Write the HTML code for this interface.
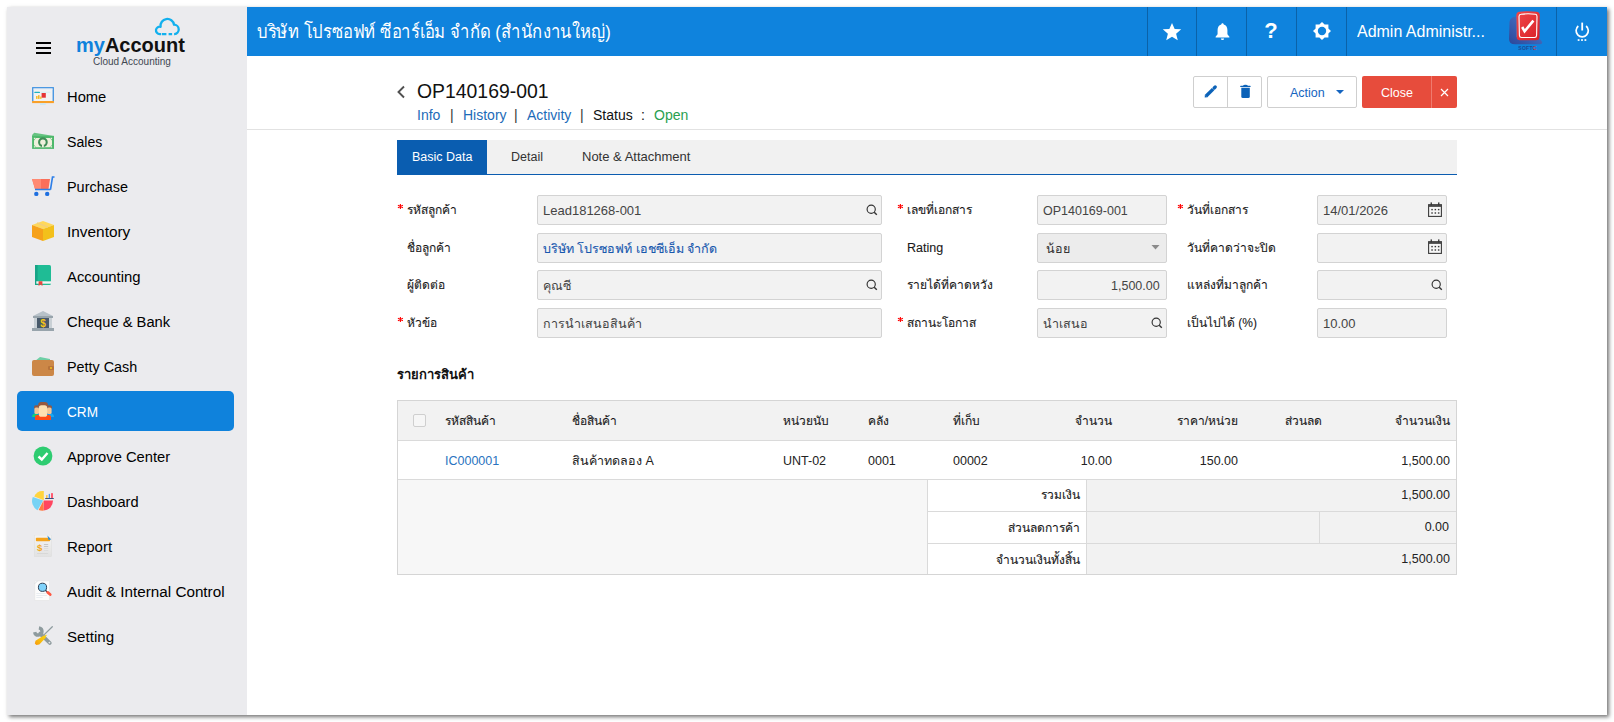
<!DOCTYPE html>
<html><head><meta charset="utf-8">
<style>
*{box-sizing:border-box;margin:0;padding:0}
html,body{width:1614px;height:722px;overflow:hidden;background:#fff;font-family:"Liberation Sans",sans-serif;color:#222}
.win{position:absolute;left:7px;top:7px;width:1600px;height:708px;background:#fff;box-shadow:2px 2px 4px rgba(0,0,0,.55)}
.side{position:absolute;left:0;top:0;width:240px;height:708px;background:#ebebee}
.abs{position:absolute}
.nav{position:absolute;left:0;width:240px;height:40px;}
.nav .ic{position:absolute;left:24px;top:9px;width:24px;height:22px}
.nav .tx{position:absolute;left:60px;top:1px;line-height:40px;font-size:15.4px;transform-origin:0 0;color:#000;white-space:nowrap}
.nav.act .bg{position:absolute;left:10px;top:0;width:217px;height:40px;background:#0f82dc;border-radius:5px}
.nav.act .tx{color:#fff}
.top{position:absolute;left:240px;top:0;width:1360px;height:49px;background:#0f83dd}
.top .ttl{position:absolute;left:10px;top:0;line-height:49px;font-size:19px;transform:scaleX(0.876);transform-origin:0 0;color:#fff;white-space:nowrap}
.sep{position:absolute;top:0;width:1px;height:49px;background:#0b62a8}
.hic{position:absolute;top:0;height:49px;width:49px}

.t{position:absolute;line-height:20px;white-space:nowrap}
.inp{position:absolute;height:30px;background:#f2f2f2;border:1px solid #d3d3d3;border-radius:2px}
.lbl{font-size:12px;color:#1a1a1a;-webkit-text-stroke:0.1px #1a1a1a}
.req{color:#e4161b;font-size:15px;margin-top:-1px}
.tbl{position:absolute;border:1px solid #d5d5d5}
.hl{position:absolute;height:1px;background:#dadada}
.vl{position:absolute;width:1px;background:#dadada}
</style></head><body>
<div class="win">
  <div class="side">
    <!-- hamburger -->
    <div class="abs" style="left:29px;top:35px;width:15px;height:2px;background:#000"></div>
    <div class="abs" style="left:29px;top:40px;width:15px;height:2px;background:#000"></div>
    <div class="abs" style="left:29px;top:45px;width:15px;height:2px;background:#000"></div>
    <!-- logo -->
    <div class="abs" style="left:69px;top:26px;font-size:20px;font-weight:700;letter-spacing:0;white-space:nowrap;line-height:24px"><span style="color:#0f82dc">my</span><span style="color:#111">Account</span></div>
    <div class="abs" style="left:86px;top:49px;font-size:10px;color:#3f4852;white-space:nowrap;line-height:12px">Cloud Accounting</div>
    <svg class="abs" style="left:147px;top:10px" width="27" height="19" viewBox="0 0 27 19"><path d="M7 17.1 H5.7 A3.7 3.7 0 1 1 6.58 9.81 A6.8 6.8 0 0 1 20.02 7.72 A4.7 4.7 0 0 1 20.45 17.1 H20.1 M7.8 17.1 H12.4 M14.6 17.1 H18.1" fill="none" stroke="#12b0ee" stroke-width="2.3" stroke-linejoin="round"/></svg>

    <div class="nav" style="top:69px"><svg class="ic" viewBox="0 0 24 22"><rect x="1.1" y="2.1" width="21.8" height="14.5" fill="#3a8fe0"/><rect x="2.4" y="3.5" width="19.2" height="12.6" fill="#f2f2f2"/><rect x="2.4" y="3.5" width="19.2" height="1" fill="#dfe9f5"/><rect x="3.3" y="6.8" width="5.7" height="1.3" rx="0.6" fill="#1eb1c0"/><rect x="9.5" y="6.8" width="10" height="0.8" fill="#c9eef3"/><rect x="5" y="11" width="1.6" height="2.9" fill="#f5c030"/><rect x="7" y="10.2" width="1.6" height="3.7" fill="#f5b52a"/><rect x="9" y="11.5" width="1.6" height="2.4" fill="#f7c840"/><rect x="10.6" y="8" width="4.2" height="4.7" fill="#e53535"/><rect x="1.1" y="16" width="21.8" height="2.1" fill="#f9a028"/><rect x="9" y="18.4" width="5.8" height="1.4" fill="#c3e8fa"/></svg><div class="tx" style="transform:scaleX(0.957)">Home</div></div>

    <div class="nav" style="top:114px"><svg class="ic" viewBox="0 0 24 22"><path d="M3.2 2.8 L23 5.9 V7 H1.1 V5z" fill="#66c381"/><rect x="1.1" y="5.9" width="21.9" height="13" fill="#4db86b"/><path d="M5.2 8 H18.8 L21 10.2 V15 L18.8 17.2 H5.2 L3 15 V10.2z" fill="#eef0dc"/><g fill="#eef0dc"><rect x="2.9" y="7.8" width="1.5" height="1.3"/><rect x="19.6" y="7.8" width="1.5" height="1.3"/><rect x="2.9" y="16.2" width="1.5" height="1.3"/><rect x="19.6" y="16.2" width="1.5" height="1.3"/></g><circle cx="11.9" cy="12.2" r="3.8" fill="none" stroke="#3f8d56" stroke-width="2.1"/><rect x="11" y="14.6" width="1.8" height="2.6" fill="#eef0dc"/></svg><div class="tx" style="transform:scaleX(0.917)">Sales</div></div>

    <div class="nav" style="top:159px"><svg class="ic" viewBox="0 0 24 22"><path d="M1 4 H19 L17.5 14 H4z" fill="#fa6f5a"/><path d="M1 4 H10 V14 H4z" fill="#ff8a73"/><path d="M19.5 14.5 H4 M19.5 14.5 L21.5 2 H23.5" stroke="#2e7fe8" stroke-width="1.6" fill="none"/><circle cx="5.3" cy="18.9" r="2.2" fill="#1e6fe0"/><circle cx="16.2" cy="18.9" r="2.2" fill="#1e6fe0"/></svg><div class="tx" style="transform:scaleX(0.937)">Purchase</div></div>

    <div class="nav" style="top:204px"><svg class="ic" viewBox="0 0 24 22"><path d="M12 1 L23 5 L12 9 L1 5z" fill="#ffd85a"/><path d="M1 5 L12 9 V21 L1 17z" fill="#f6a11a"/><path d="M23 5 L12 9 V21 L23 17z" fill="#f3c01b"/><path d="M6 3 L17 7" stroke="#f2cf7a" stroke-width="1.5"/></svg><div class="tx" style="transform:scaleX(1.0)">Inventory</div></div>

    <div class="nav" style="top:249px"><svg class="ic" viewBox="0 0 24 22"><rect x="4" y="0" width="16" height="20" rx="1.6" fill="#1fbc95"/><rect x="4" y="0" width="2.6" height="20" fill="#17a487"/><rect x="5.3" y="16.3" width="14.7" height="2.4" fill="#f4f4f4"/><path d="M7.6 16.3 H11.4 V21 L9.5 19.6 L7.6 21z" fill="#e8463f"/></svg><div class="tx" style="transform:scaleX(0.965)">Accounting</div></div>

    <div class="nav" style="top:294px"><svg class="ic" viewBox="0 0 24 22"><path d="M12 1 L22 6 H2z" fill="#b7c1c8"/><rect x="2" y="6" width="20" height="2" fill="#98a4ac"/><rect x="3" y="8" width="3" height="10" fill="#c9d0d5"/><rect x="18" y="8" width="3" height="10" fill="#c9d0d5"/><rect x="6" y="8" width="12" height="10" fill="#48596a"/><text x="12" y="16.5" font-size="10" font-weight="700" fill="#f5c518" text-anchor="middle" font-family="Liberation Sans">$</text><rect x="1" y="18" width="22" height="3" fill="#98a4ac"/></svg><div class="tx" style="transform:scaleX(0.957)">Cheque &amp; Bank</div></div>

    <div class="nav" style="top:339px"><svg class="ic" viewBox="0 0 24 22"><path d="M4 6 L9 2 L19 4 L19 6z" fill="#6ecfa5"/><rect x="1" y="5" width="22" height="16" rx="2" fill="#cc8747"/><rect x="17" y="11" width="6" height="4" rx="1" fill="#b8733a"/><circle cx="20" cy="13" r="1" fill="#f5c518"/></svg><div class="tx" style="transform:scaleX(0.932)">Petty Cash</div></div>

    <div class="nav act" style="top:384px"><div class="bg"></div><svg class="ic" viewBox="0 0 24 22"><path d="M1 17 Q1 13.5 4.5 13.5 H6.5 V17z" fill="#16cf7c"/><path d="M23 17 Q23 13.5 19.5 13.5 H17.5 V17z" fill="#16a9f4"/><path d="M3 8.6 V6.8 Q3 5.2 4.8 5.2 H7.8 V8.6z" fill="#8f5a48"/><path d="M21 8.6 V6.8 Q21 5.2 19.2 5.2 H16.2 V8.6z" fill="#8f5a48"/><rect x="3.4" y="7.4" width="4.6" height="6.6" rx="1.6" fill="#f6c592"/><rect x="16" y="7.4" width="4.6" height="6.6" rx="1.6" fill="#f6c592"/><path d="M4 20 V16.6 Q4 14.9 6 14.9 H18 Q20 14.9 20 16.6 V20z" fill="#ff4b16"/><path d="M7 7 L7.3 3.8 Q7.7 2 10 2 H14 Q16.5 2 16.8 3.8 L17.1 7z" fill="#96593f"/><rect x="7.8" y="5.2" width="8.4" height="11.6" rx="2.6" fill="#fde0b2"/></svg><div class="tx" style="transform:scaleX(0.883)">CRM</div></div>

    <div class="nav" style="top:429px"><svg class="ic" viewBox="0 0 24 22"><circle cx="12" cy="11" r="9.4" fill="#2ecc71"/><path d="M7.5 11.5 L10.8 14.5 L16.5 8" stroke="#fff" stroke-width="2.4" fill="none"/></svg><div class="tx" style="transform:scaleX(0.957)">Approve Center</div></div>

    <div class="nav" style="top:474px"><svg class="ic" viewBox="0 0 24 22"><path d="M12.8 10.3 L12.8 1 A9.3 9.3 0 0 0 3.2 6.6 z" fill="#ffd43f"/><path d="M12.1 10.6 L1.8 7 A10.6 10.6 0 0 0 6.6 20.3 z" fill="#77d3f5"/><path d="M12.5 10.6 L7.6 19.9 A10 10 0 0 0 12.8 20.6 z" fill="#ff7b42"/><path d="M12.8 10.6 H22 A9.9 9.9 0 0 1 12.8 20.6 z" fill="#ff4660"/><rect x="15" y="5" width="1.6" height="3" rx="0.6" fill="#f7c54a"/><rect x="17.7" y="3.8" width="1.3" height="4.2" rx="0.6" fill="#4b92f2"/><rect x="20" y="2.9" width="2" height="5.1" rx="0.6" fill="#ff5a70"/><rect x="14.1" y="7.9" width="8.8" height="1" rx="0.4" fill="#3d4f7c"/></svg><div class="tx" style="transform:scaleX(0.951)">Dashboard</div></div>

    <div class="nav" style="top:519px"><svg class="ic" viewBox="0 0 24 22"><defs><linearGradient id="rpg" x1="0" y1="0" x2="0" y2="1"><stop offset="0" stop-color="#f4f4f4"/><stop offset="1" stop-color="#e2e2e2"/></linearGradient></defs><rect x="3.2" y="0" width="17.4" height="21.6" fill="url(#rpg)" stroke="#dcdcdc" stroke-width="0.5"/><rect x="4.9" y="2.8" width="14.2" height="3.5" rx="0.8" fill="#f5a31a"/><path d="M16.4 0.6 L20.3 4.4 L17.5 5 z" fill="#2f8fd8"/><text x="8.7" y="15.6" font-size="9.5" font-weight="700" fill="#f4a81a" text-anchor="middle" font-family="Liberation Sans">$</text><rect x="12.9" y="9" width="4.3" height="0.8" fill="#bdbdbd"/><rect x="12.9" y="11.1" width="4.3" height="0.8" fill="#bdbdbd"/><rect x="12.9" y="13.2" width="4.3" height="0.6" fill="#d6d6d6"/><rect x="12.9" y="15.4" width="4.3" height="0.6" fill="#d6d6d6"/><rect x="6.1" y="18" width="11.1" height="0.6" fill="#cfcfcf"/></svg><div class="tx" style="transform:scaleX(0.978)">Report</div></div>

    <div class="nav" style="top:564px"><svg class="ic" viewBox="0 0 24 22"><rect x="3.9" y="1" width="14.6" height="19.3" fill="#fcfcfc" stroke="#e2e2e2" stroke-width="0.5"/><path d="M3.7 3.8 L6.6 0.8" stroke="#d0d4da" stroke-width="0.7"/><rect x="5.3" y="13" width="9.5" height="0.6" fill="#dde3ea"/><rect x="5.3" y="15" width="10.7" height="0.6" fill="#dde3ea"/><rect x="5.3" y="17" width="6.4" height="0.6" fill="#dde3ea"/><path d="M14.4 10.2 L16.2 12" stroke="#2b3f55" stroke-width="1.3"/><path d="M16.7 12.4 L19.2 14.5" stroke="#ff5a45" stroke-width="2.8" stroke-linecap="round"/><circle cx="11.5" cy="7.3" r="4.1" fill="#80d3fb" stroke="#2b3f55" stroke-width="1"/></svg><div class="tx" style="transform:scaleX(0.99)">Audit &amp; Internal Control</div></div>

    <div class="nav" style="top:609px"><svg class="ic" viewBox="0 0 24 22"><defs><linearGradient id="sdh" x1="1" y1="0" x2="0" y2="1"><stop offset="0" stop-color="#fbd20e"/><stop offset="0.6" stop-color="#f7b80e"/><stop offset="1" stop-color="#f7960f"/></linearGradient></defs><path d="M9.2 8.6 L18.8 18" stroke="#8e9b9e" stroke-width="3.8" stroke-linecap="round"/><path d="M7.94 2.86 A3.7 3.7 0 1 1 3.66 7.14" fill="none" stroke="#8e9b9e" stroke-width="3.3"/><circle cx="18.4" cy="17.6" r="0.95" fill="#e6e6e6"/><path d="M21.3 1.7 L13.5 9.4" stroke="#8e9b9e" stroke-width="1.3" stroke-linecap="round"/><path d="M15 9.6 L12.4 12.2 L13.2 13 L15.8 10.4z" fill="#fbd20e"/><path d="M12.8 10.4 L15 12.6 L8.3 19.5 L5.3 20 L3.8 18.4 L4.5 15.8z" fill="url(#sdh)"/></svg><div class="tx" style="transform:scaleX(0.983)">Setting</div></div>
  </div>

  <div class="top">
    <div class="ttl">บริษัท โปรซอฟท์ ซีอาร์เอ็ม จำกัด (สำนักงานใหญ่)</div>
    <div class="sep" style="left:900px"></div>
    <div class="sep" style="left:949px"></div>
    <div class="sep" style="left:999px"></div>
    <div class="sep" style="left:1049px"></div>
    <div class="sep" style="left:1099px"></div>
    <div class="sep" style="left:1309px"></div>
    <div class="abs" style="left:1110px;top:0;line-height:49px;font-size:17px;color:#fff;white-space:nowrap;transform:scaleX(0.94);transform-origin:0 0">Admin Administr...</div>
    <svg class="abs" style="left:915px;top:15px" width="20" height="20" viewBox="0 0 18 18"><path d="M9 0.8 L11.4 6.3 L17.3 6.6 L12.7 10.5 L14.2 16.4 L9 13.2 L3.8 16.4 L5.3 10.5 L0.7 6.6 L6.6 6.3z" fill="#fff"/></svg>
    <svg class="abs" style="left:967px;top:15px" width="17" height="19" viewBox="0 0 18 20"><path d="M9 1.2 C9.8 1.2 10.3 1.8 10.3 2.6 C13 3.3 14.2 5.6 14.2 8.5 V13 L16.3 15.6 V16.3 H1.7 V15.6 L3.8 13 V8.5 C3.8 5.6 5 3.3 7.7 2.6 C7.7 1.8 8.2 1.2 9 1.2z" fill="#fff"/><path d="M7.3 17.3 H10.7 A1.7 1.7 0 0 1 7.3 17.3z" fill="#fff"/></svg>
    <div class="abs" style="left:1015px;top:11px;width:18px;line-height:26px;font-size:22px;font-weight:700;color:#fff;text-align:center">?</div>
    <svg class="abs" style="left:1066px;top:15px" width="18" height="18" viewBox="0 0 18 18"><path d="M9 0 L11.1 2.2 L14.2 2.2 L14.2 5.1 L16.6 7.2 L16.6 7.2 L14.2 9.3 ..." fill="none"/><g fill="#fff"><polygon points="9,0 11.6,2.6 15.4,2.6 15.4,6.4 18,9 15.4,11.6 15.4,15.4 11.6,15.4 9,18 6.4,15.4 2.6,15.4 2.6,11.6 0,9 2.6,6.4 2.6,2.6 6.4,2.6"/></g><circle cx="9" cy="9" r="4.2" fill="#0f83dd"/></svg>
    <svg class="abs" style="left:1253px;top:0px" width="56" height="49" viewBox="0 0 56 49"><defs><linearGradient id="bg1" x1="0" y1="1" x2="1" y2="0"><stop offset="0" stop-color="#2b4799"/><stop offset="1" stop-color="#4f7fd4"/></linearGradient><linearGradient id="rg1" x1="0" y1="0" x2="1" y2="1"><stop offset="0" stop-color="#f0484a"/><stop offset="1" stop-color="#d81f26"/></linearGradient></defs><path d="M16 9.5 Q10 10 9.5 15 L9 32 Q9 37.3 15 37.3 L40 37.3 Q43.5 37 41.5 34 L38 30 L16 30z" fill="url(#bg1)"/><path d="M19 4.8 Q28 3.5 37 4.8 Q39.8 5.2 39.8 8.5 L39.5 30 Q39.3 33.3 36 33.3 L20 33.3 Q16.7 33.3 16.6 30 L16.3 8.5 Q16.3 5.2 19 4.8z" fill="url(#rg1)"/><path d="M21 7.3 Q28 6.3 35.5 7.3 Q37 7.5 37 9.5 L36.6 28.5 Q36.5 30.5 34.5 30.5 L21.5 30.5 Q19.5 30.5 19.4 28.5 L19 9.5 Q19 7.5 21 7.3z" fill="none" stroke="#fff" stroke-width="1.1"/><path d="M22.2 20 L24.6 24.3 L33.4 13.6" fill="none" stroke="#fff" stroke-width="2.6" stroke-linejoin="miter"/><text x="27.5" y="42.6" font-size="5" fill="#1f3a85" opacity="0.8" text-anchor="middle" font-family="Liberation Sans" font-weight="700" letter-spacing="0.3">SOFT<tspan fill="#d22">C</tspan></text></svg>
    <svg class="abs" style="left:1309px;top:0px" width="54" height="49" viewBox="0 0 54 49"><path d="M22.3 19 A6.1 6.1 0 1 0 30.1 19" fill="none" stroke="#fff" stroke-width="1.7"/><path d="M26.2 15.6 V23.5" stroke="#fff" stroke-width="1.8"/><g fill="#fff"><rect x="21.7" y="32.2" width="1.8" height="1.7"/><rect x="25.1" y="32.2" width="1.8" height="1.7"/><rect x="28.5" y="32.2" width="1.8" height="1.7"/></g></svg>

  </div>
</div>

<div class="pg">
  <!-- page header -->
  <svg class="abs" style="left:396px;top:85px" width="10" height="14" viewBox="0 0 10 14"><path d="M8 1.5 L2.5 7 L8 12.5" fill="none" stroke="#505050" stroke-width="1.9"/></svg>
  <div class="t" style="left:417px;top:81px;font-size:19.4px;color:#111">OP140169-001</div>
  <div class="t" style="left:417px;top:105px;font-size:14px;color:#1c6bb8">Info</div>
  <div class="t" style="left:450px;top:105px;font-size:14px;color:#333">|</div>
  <div class="t" style="left:463px;top:105px;font-size:14px;color:#1c6bb8">History</div>
  <div class="t" style="left:514px;top:105px;font-size:14px;color:#333">|</div>
  <div class="t" style="left:527px;top:105px;font-size:14px;color:#1c6bb8">Activity</div>
  <div class="t" style="left:580px;top:105px;font-size:14px;color:#333">|</div>
  <div class="t" style="left:593px;top:105px;font-size:14px;color:#111">Status</div>
  <div class="t" style="left:641px;top:105px;font-size:14px;color:#111">:</div>
  <div class="t" style="left:654px;top:105px;font-size:14px;color:#29a04f">Open</div>
  <div class="abs" style="left:247px;top:129px;width:1360px;height:1px;background:#e2e2e2"></div>

  <!-- buttons -->
  <div class="abs" style="left:1193px;top:76px;width:69px;height:32px;border:1px solid #cfcfcf;border-radius:2px;background:#fff"></div>
  <div class="abs" style="left:1227px;top:77px;width:1px;height:30px;background:#cfcfcf"></div>
  <svg class="abs" style="left:1203px;top:85px" width="14" height="14" viewBox="0 0 14 14"><path d="M2.9 11.3 L10.1 4.1" stroke="#0b62b8" stroke-width="3.4"/><path d="M1.7 12.6 L1.9 10.1 L4.1 12.3z" fill="#0b62b8"/><path d="M11.2 3 L12.2 2" stroke="#0b62b8" stroke-width="3.2" stroke-linecap="round"/></svg>
  <svg class="abs" style="left:1239px;top:84px" width="12" height="16" viewBox="0 0 12 16"><rect x="1.2" y="1.8" width="10.4" height="1.2" rx="0.5" fill="#0b62b8"/><path d="M4 1.9 Q4.2 0.7 6.4 0.7 Q8.6 0.7 8.9 1.9z" fill="#0b62b8"/><path d="M2.3 3.8 H10.8 V12.4 Q10.8 13.9 9.3 13.9 H3.8 Q2.3 13.9 2.3 12.4z" fill="#0b62b8"/></svg>
  <div class="abs" style="left:1267px;top:76px;width:90px;height:32px;border:1px solid #cfcfcf;border-radius:2px;background:#fff"></div>
  <div class="t" style="left:1290px;top:83px;font-size:12.5px;color:#1565c0">Action</div>
  <svg class="abs" style="left:1336px;top:90px" width="8" height="4" viewBox="0 0 8 4"><path d="M0 0 H8 L4 4z" fill="#1565c0"/></svg>
  <div class="abs" style="left:1362px;top:76px;width:95px;height:32px;background:#e74c3c;border-radius:2px"></div>
  <div class="abs" style="left:1431px;top:76px;width:1px;height:32px;background:#ef7a6e"></div>
  <div class="t" style="left:1381px;top:83px;font-size:12.5px;color:#fff">Close</div>
  <svg class="abs" style="left:1440px;top:88px" width="9" height="9" viewBox="0 0 9 9"><path d="M1 1 L8 8 M8 1 L1 8" stroke="#fff" stroke-width="1.2"/></svg>

  <!-- tabs -->
  <div class="abs" style="left:397px;top:140px;width:1060px;height:35px;background:#f1f1f1;border-bottom:1px solid #0b5cb0"></div>
  <div class="abs" style="left:397px;top:140px;width:90px;height:35px;background:#0a5db0"></div>
  <div class="t" style="left:412px;top:147px;font-size:12.5px;color:#fff">Basic Data</div>
  <div class="t" style="left:511px;top:147px;font-size:12.5px;color:#333">Detail</div>
  <div class="t" style="left:582px;top:147px;font-size:13px;color:#333">Note &amp; Attachment</div>

  <!-- form labels -->
  <svg class="abs" style="left:396px;top:202px" width="9" height="9" viewBox="0 0 9 9"><path d="M4.4 2 V7 M1.9 3.3 L6.9 5.7 M1.9 5.7 L6.9 3.3" stroke="#f00" stroke-width="1.1"/></svg>
  <div class="t lbl" style="left:407px;top:200px">รหัสลูกค้า</div>
  <div class="t lbl" style="left:407px;top:238px">ชื่อลูกค้า</div>
  <div class="t lbl" style="left:407px;top:275px">ผู้ติดต่อ</div>
  <svg class="abs" style="left:396px;top:315px" width="9" height="9" viewBox="0 0 9 9"><path d="M4.4 2 V7 M1.9 3.3 L6.9 5.7 M1.9 5.7 L6.9 3.3" stroke="#f00" stroke-width="1.1"/></svg>
  <div class="t lbl" style="left:407px;top:313px">หัวข้อ</div>

  <svg class="abs" style="left:896px;top:202px" width="9" height="9" viewBox="0 0 9 9"><path d="M4.4 2 V7 M1.9 3.3 L6.9 5.7 M1.9 5.7 L6.9 3.3" stroke="#f00" stroke-width="1.1"/></svg>
  <div class="t lbl" style="left:907px;top:200px">เลขที่เอกสาร</div>
  <div class="t lbl" style="left:907px;top:238px;font-size:12.5px">Rating</div>
  <div class="t lbl" style="left:907px;top:275px">รายได้ที่คาดหวัง</div>
  <svg class="abs" style="left:896px;top:315px" width="9" height="9" viewBox="0 0 9 9"><path d="M4.4 2 V7 M1.9 3.3 L6.9 5.7 M1.9 5.7 L6.9 3.3" stroke="#f00" stroke-width="1.1"/></svg>
  <div class="t lbl" style="left:907px;top:313px">สถานะโอกาส</div>

  <svg class="abs" style="left:1176px;top:202px" width="9" height="9" viewBox="0 0 9 9"><path d="M4.4 2 V7 M1.9 3.3 L6.9 5.7 M1.9 5.7 L6.9 3.3" stroke="#f00" stroke-width="1.1"/></svg>
  <div class="t lbl" style="left:1187px;top:200px">วันที่เอกสาร</div>
  <div class="t lbl" style="left:1187px;top:238px">วันที่คาดว่าจะปิด</div>
  <div class="t lbl" style="left:1187px;top:275px">แหล่งที่มาลูกค้า</div>
  <div class="t lbl" style="left:1187px;top:313px">เป็นไปได้ (%)</div>

  <!-- inputs -->
  <div class="inp" style="left:537px;top:195px;width:345px"></div>
  <div class="inp" style="left:537px;top:233px;width:345px"></div>
  <div class="inp" style="left:537px;top:270px;width:345px"></div>
  <div class="inp" style="left:537px;top:308px;width:345px"></div>
  <div class="inp" style="left:1037px;top:195px;width:130px"></div>
  <div class="inp" style="left:1037px;top:233px;width:130px;background:#ececec"></div>
  <div class="inp" style="left:1037px;top:270px;width:130px"></div>
  <div class="inp" style="left:1037px;top:308px;width:130px"></div>
  <div class="inp" style="left:1317px;top:195px;width:130px"></div>
  <div class="inp" style="left:1317px;top:233px;width:130px"></div>
  <div class="inp" style="left:1317px;top:270px;width:130px"></div>
  <div class="inp" style="left:1317px;top:308px;width:130px"></div>

  <div class="t" style="left:543px;top:201px;font-size:13px;color:#444">Lead181268-001</div>
  <div class="t" style="left:543px;top:239px;font-size:12.5px;color:#1858ae;-webkit-text-stroke:0.1px #1858ae">บริษัท โปรซอฟท์ เอชซีเอ็ม จำกัด</div>
  <div class="t" style="left:543px;top:276px;font-size:12.5px;color:#444">คุณซี</div>
  <div class="t" style="left:543px;top:314px;font-size:12.5px;color:#444">การนำเสนอสินค้า</div>
  <div class="t" style="left:1043px;top:201px;font-size:12.5px;color:#444">OP140169-001</div>
  <div class="t" style="left:1046px;top:239px;font-size:12.5px;color:#333">น้อย</div>
  <div class="t" style="left:1111px;top:276px;font-size:12.5px;color:#444">1,500.00</div>
  <div class="t" style="left:1043px;top:314px;font-size:12.5px;color:#444">นำเสนอ</div>
  <div class="t" style="left:1323px;top:201px;font-size:13px;color:#444">14/01/2026</div>
  <div class="t" style="left:1323px;top:314px;font-size:13px;color:#444">10.00</div>

  <!-- input icons -->
  <svg class="abs" style="left:864px;top:202px" width="16" height="16" viewBox="0 0 16 16"><circle cx="7.2" cy="7.2" r="4.1" fill="none" stroke="#333" stroke-width="1.15"/><path d="M10.2 10.2 L12.8 12.8" stroke="#333" stroke-width="1.4"/></svg>
  <svg class="abs" style="left:864px;top:277px" width="16" height="16" viewBox="0 0 16 16"><circle cx="7.2" cy="7.2" r="4.1" fill="none" stroke="#333" stroke-width="1.15"/><path d="M10.2 10.2 L12.8 12.8" stroke="#333" stroke-width="1.4"/></svg>
  <svg class="abs" style="left:1149px;top:315px" width="16" height="16" viewBox="0 0 16 16"><circle cx="7.2" cy="7.2" r="4.1" fill="none" stroke="#333" stroke-width="1.15"/><path d="M10.2 10.2 L12.8 12.8" stroke="#333" stroke-width="1.4"/></svg>
  <svg class="abs" style="left:1429px;top:277px" width="16" height="16" viewBox="0 0 16 16"><circle cx="7.2" cy="7.2" r="4.1" fill="none" stroke="#333" stroke-width="1.15"/><path d="M10.2 10.2 L12.8 12.8" stroke="#333" stroke-width="1.4"/></svg>
  <svg class="abs" style="left:1151px;top:245px" width="9" height="5" viewBox="0 0 9 5"><path d="M0.5 0 H8.5 L4.5 4.5z" fill="#8a8a8a"/></svg>
  <svg class="abs" style="left:1428px;top:202px" width="14" height="15" viewBox="0 0 14 15"><rect x="0.6" y="2.7" width="12.8" height="11.7" fill="#f7f7f7" stroke="#3a3a3a" stroke-width="1.1"/><rect x="0.6" y="2.7" width="12.8" height="2.2" fill="#4a4a4a"/><rect x="2.6" y="0.4" width="1.3" height="3" fill="#333"/><rect x="10.1" y="0.4" width="1.3" height="3" fill="#333"/><g fill="#3a3a3a"><rect x="3.3" y="6.9" width="1.5" height="1.4"/><rect x="6.6" y="6.9" width="1.5" height="1.4"/><rect x="9.9" y="6.9" width="1.5" height="1.4"/><rect x="3.3" y="10.3" width="1.5" height="1.4"/><rect x="6.6" y="10.3" width="1.5" height="1.4"/><rect x="9.9" y="10.3" width="1.5" height="1.4"/></g></svg>
  <svg class="abs" style="left:1428px;top:239px" width="14" height="15" viewBox="0 0 14 15"><rect x="0.6" y="2.7" width="12.8" height="11.7" fill="#f7f7f7" stroke="#3a3a3a" stroke-width="1.1"/><rect x="0.6" y="2.7" width="12.8" height="2.2" fill="#4a4a4a"/><rect x="2.6" y="0.4" width="1.3" height="3" fill="#333"/><rect x="10.1" y="0.4" width="1.3" height="3" fill="#333"/><g fill="#3a3a3a"><rect x="3.3" y="6.9" width="1.5" height="1.4"/><rect x="6.6" y="6.9" width="1.5" height="1.4"/><rect x="9.9" y="6.9" width="1.5" height="1.4"/><rect x="3.3" y="10.3" width="1.5" height="1.4"/><rect x="6.6" y="10.3" width="1.5" height="1.4"/><rect x="9.9" y="10.3" width="1.5" height="1.4"/></g></svg>

  <!-- items -->
  <div class="t" style="left:397px;top:365px;font-size:13px;font-weight:700;color:#111">รายการสินค้า</div>
  <div class="abs" style="left:397px;top:400px;width:1060px;height:175px;border:1px solid #d5d5d5;background:#fff"></div>
  <div class="abs" style="left:398px;top:401px;width:1058px;height:39px;background:#f2f2f2"></div>
  <div class="hl" style="left:398px;top:440px;width:1058px"></div>
  <div class="hl" style="left:398px;top:479px;width:1058px"></div>
  <div class="abs" style="left:398px;top:480px;width:529px;height:94px;background:#f7f7f7"></div>
  <div class="vl" style="left:927px;top:480px;height:94px"></div>
  <div class="abs" style="left:1087px;top:480px;width:369px;height:94px;background:#f2f2f2"></div>
  <div class="vl" style="left:1086px;top:480px;height:94px"></div>
  <div class="hl" style="left:928px;top:511px;width:528px"></div>
  <div class="hl" style="left:928px;top:543px;width:528px"></div>
  <div class="vl" style="left:1319px;top:512px;height:31px"></div>
  <div class="abs" style="left:413px;top:414px;width:13px;height:13px;border:1px solid #cfcfcf;border-radius:2px;background:#f6f6f6"></div>

  <div class="t lbl" style="left:445px;top:411px">รหัสสินค้า</div>
  <div class="t lbl" style="left:572px;top:411px">ชื่อสินค้า</div>
  <div class="t lbl" style="left:783px;top:411px">หน่วยนับ</div>
  <div class="t lbl" style="left:868px;top:411px">คลัง</div>
  <div class="t lbl" style="left:953px;top:411px">ที่เก็บ</div>
  <div class="t lbl" style="right:502px;top:411px">จำนวน</div>
  <div class="t lbl" style="right:376px;top:411px">ราคา/หน่วย</div>
  <div class="t lbl" style="left:1285px;top:411px">ส่วนลด</div>
  <div class="t lbl" style="right:164px;top:411px">จำนวนเงิน</div>

  <div class="t" style="left:445px;top:451px;font-size:12.5px;color:#2a73c0">IC000001</div>
  <div class="t" style="left:572px;top:451px;font-size:12.5px;color:#222">สินค้าทดลอง A</div>
  <div class="t" style="left:783px;top:451px;font-size:12.5px;color:#222">UNT-02</div>
  <div class="t" style="left:868px;top:451px;font-size:12.5px;color:#222">0001</div>
  <div class="t" style="left:953px;top:451px;font-size:12.5px;color:#222">00002</div>
  <div class="t" style="right:502px;top:451px;font-size:12.5px;color:#222">10.00</div>
  <div class="t" style="right:376px;top:451px;font-size:12.5px;color:#222">150.00</div>
  <div class="t" style="right:164px;top:451px;font-size:12.5px;color:#222">1,500.00</div>

  <div class="t lbl" style="right:534px;top:485px">รวมเงิน</div>
  <div class="t lbl" style="right:534px;top:518px">ส่วนลดการค้า</div>
  <div class="t lbl" style="right:534px;top:550px">จำนวนเงินทั้งสิ้น</div>
  <div class="t" style="right:164px;top:485px;font-size:12.5px;color:#222">1,500.00</div>
  <div class="t" style="right:165px;top:517px;font-size:12.5px;color:#222">0.00</div>
  <div class="t" style="right:164px;top:549px;font-size:12.5px;color:#222">1,500.00</div>
</div>
</body></html>
